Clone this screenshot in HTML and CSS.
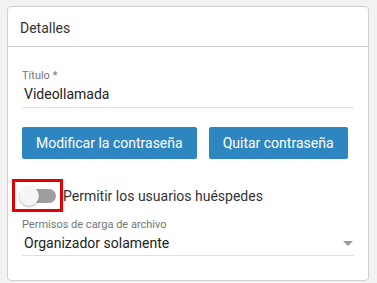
FILE: index.html
```html
<!DOCTYPE html>
<html lang="es">
<head>
  <meta charset="UTF-8" />
  <title>Detalles</title>
  <link rel="stylesheet" href="styles.css">
</head>
<body>
  <div class="card">
    <div class="card-header">Detalles</div>
    <div class="card-body">
      <div class="field">
        <label class="field-label">Título *</label>
        <div class="field-value">Videollamada</div>
      </div>
      <div class="buttons">
        <button class="btn">Modificar la contraseña</button>
        <button class="btn">Quitar contraseña</button>
      </div>
      <div class="toggle-row">
        <span class="highlight">
          <span class="switch"><span class="knob"></span></span>
        </span>
        <span class="toggle-text">Permitir los usuarios huéspedes</span>
      </div>
      <div class="field select-field">
        <label class="field-label">Permisos de carga de archivo</label>
        <div class="field-value select-value">
          <span>Organizador solamente</span>
          <span class="caret"></span>
        </div>
      </div>
    </div>
  </div>
</body>
</html>
```

FILE: styles.css
```css
body {
  margin: 0;
  padding: 6px 8px 0 7px;
  background: #f2f2f2;
  font-family: Roboto, 'Liberation Sans', sans-serif;
  color: #333;
}

.card {
  background: #fff;
  border: 1px solid #cfcfcf;
  border-radius: 4px;
  height: 275px;
  box-sizing: border-box;
}

.card-header {
  height: 39px;
  padding: 0 0 0 12px;
  line-height: 42px;
  font-size: 14px;
  color: #333;
  border-bottom: 1px solid #cfcfcf;
}

.card-body {
  padding: 0 14px;
}

.field {
  padding-top: 22px;
}

.field-label {
  display: block;
  font-size: 11px;
  color: #757575;
  line-height: 14px;
}

.field-value {
  font-size: 14px;
  line-height: 22px;
  padding-bottom: 2px;
  padding-left: 2px;
  border-bottom: 1px solid #e0e0e0;
  color: #222;
}

.buttons {
  display: flex;
  gap: 12px;
  padding-top: 19px;
}

.btn {
  background: #2e86c1;
  color: #fff;
  border: none;
  border-radius: 2px;
  height: 32px;
  padding: 0 14px;
  font-family: inherit;
  font-size: 14px;
  white-space: nowrap;
}

.toggle-row {
  display: flex;
  align-items: center;
  margin-top: 20px;
  margin-left: -10px;
}

.highlight {
  display: flex;
  align-items: center;
  justify-content: center;
  width: 45px;
  height: 27px;
  border: 3px solid #e30000;
}

.switch {
  position: relative;
  width: 34px;
  height: 14px;
  border-radius: 7px;
  background: #9e9e9e;
  margin-left: 2px;
}

.knob {
  position: absolute;
  left: -3px;
  top: -3px;
  width: 20px;
  height: 20px;
  border-radius: 50%;
  background: #f5f5f5;
  box-shadow: 0 1px 2px rgba(0, 0, 0, 0.3);
}

.toggle-text {
  font-size: 14px;
  color: #333;
}

.select-field {
  padding-top: 6px;
}

.select-value {
  display: flex;
  justify-content: space-between;
  align-items: center;
  padding-bottom: 1px;
}

.caret {
  width: 0;
  height: 0;
  border-left: 5px solid transparent;
  border-right: 5px solid transparent;
  border-top: 5px solid #999;
  margin-right: 1px;
}
```
